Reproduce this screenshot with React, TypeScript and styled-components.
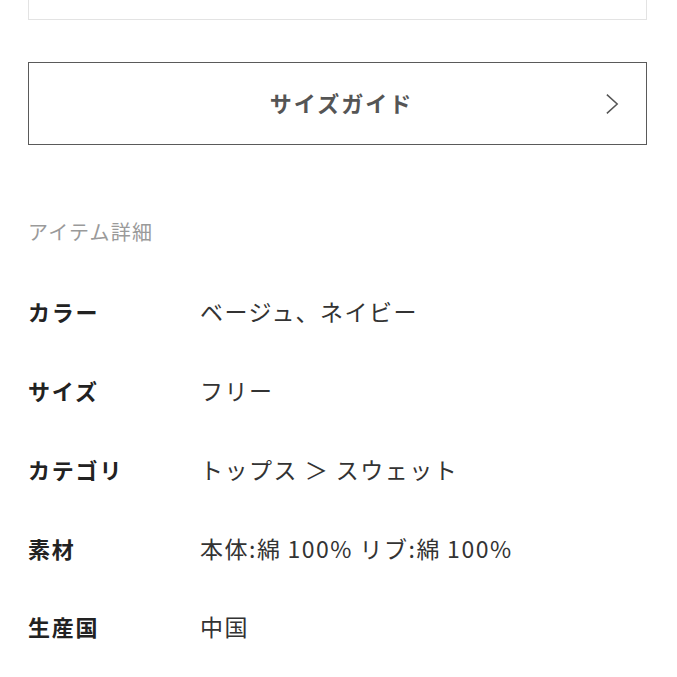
import styled, { createGlobalStyle } from 'styled-components';

const GlobalStyle = createGlobalStyle`
  html, body {
    margin: 0;
    padding: 0;
    background: #ffffff;
  }
  body {
    font-family: "Noto Sans CJK JP", "Noto Sans", sans-serif;
    -webkit-font-smoothing: antialiased;
  }
`;

const details = [
  { label: 'カラー', value: 'ベージュ、ネイビー' },
  { label: 'サイズ', value: 'フリー' },
  { label: 'カテゴリ', value: 'トップス ＞ スウェット' },
  { label: '素材', value: '本体:綿\u2009100% リブ:綿\u2009100%' },
  { label: '生産国', value: '中国' },
];

export default function App() {
  return (
    <>
      <GlobalStyle />
      <Page>
        <TopBox />
        <GuideButton type="button">
          サイズガイド
          <Chevron viewBox="0 0 16 24" aria-hidden>
            <path d="M2 2 L13 12 L2 22" />
          </Chevron>
        </GuideButton>

        <Section>
          <Heading>アイテム詳細</Heading>
          <DetailList>
            {details.map(({ label, value }) => (
              <DetailRow key={label}>
                <Label>{label}</Label>
                <Value>{value}</Value>
              </DetailRow>
            ))}
          </DetailList>
        </Section>
      </Page>
    </>
  );
}

// Styled Components

const Page = styled.div`
  width: 619px;
  padding: 0 30px 0 28px;
  overflow: hidden;
`;

const TopBox = styled.div`
  box-sizing: border-box;
  height: 60px;
  margin-top: -40px;
  border: 1px solid #e3e3e3;
  background: #ffffff;
`;

const GuideButton = styled.button`
  position: relative;
  box-sizing: border-box;
  display: flex;
  align-items: center;
  justify-content: center;
  width: 100%;
  height: 83px;
  margin-top: 42px;
  padding: 0 0 4px 8px;
  border: 1.5px solid #5a5a5a;
  background: #ffffff;
  color: #555555;
  font-family: "Noto Sans CJK JP", sans-serif;
  font-size: 22px;
  font-weight: 700;
  letter-spacing: 2px;
  cursor: pointer;
`;

const Chevron = styled.svg`
  position: absolute;
  right: 26px;
  top: 50%;
  width: 15px;
  height: 24px;
  transform: translateY(-50%);
  fill: none;
  stroke: #555555;
  stroke-width: 1.6;
`;

const Section = styled.section`
  padding-top: 71px;
`;

const Heading = styled.h2`
  margin: 0;
  height: 32px;
  line-height: 32px;
  color: #9a9a9a;
  font-size: 20px;
  font-weight: 400;
  letter-spacing: 1.2px;
`;

const DetailList = styled.dl`
  margin: 24px 0 0;
`;

const DetailRow = styled.div`
  display: flex;
  align-items: center;
  height: 78.75px;
`;

const Label = styled.dt`
  width: 172px;
  flex-shrink: 0;
  color: #222222;
  font-size: 22px;
  font-weight: 700;
  letter-spacing: 1.8px;
`;

const Value = styled.dd`
  margin: 0;
  color: #333333;
  font-size: 23px;
  font-weight: 400;
  letter-spacing: 1.5px;
`;
